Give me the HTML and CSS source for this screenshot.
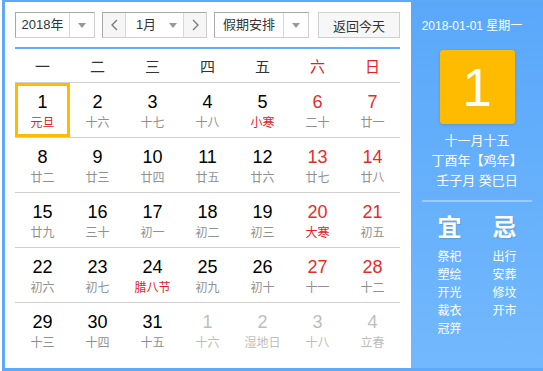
FILE: index.html
```html
<!DOCTYPE html>
<html lang="zh-CN">
<head>
    <meta charset="UTF-8">
    <title>万年历</title>
    <link rel="stylesheet" href="styles.css">
</head>
<body>

    <div class="calendar">

        <!-- Left part: selectors and month grid -->
        <div class="main">
            <div class="toolbar">
                <div class="select year-select">
                    <span class="select-text">2018年</span>
                    <span class="select-arrow"><i class="caret"></i></span>
                </div>
                <div class="select month-select">
                    <span class="nav-btn">
                        <svg width="7" height="12" viewBox="0 0 7 12"><polyline points="6,1 1,6 6,11" fill="none" stroke="#777" stroke-width="1.3"/></svg>
                    </span>
                    <span class="select-text month-text">1月</span>
                    <span class="month-caret"><i class="caret"></i></span>
                    <span class="nav-btn">
                        <svg width="7" height="12" viewBox="0 0 7 12"><polyline points="1,1 6,6 1,11" fill="none" stroke="#777" stroke-width="1.3"/></svg>
                    </span>
                </div>
                <div class="select holiday-select">
                    <span class="select-text">假期安排</span>
                    <span class="select-arrow"><i class="caret"></i></span>
                </div>
                <button class="today-btn">返回今天</button>
            </div>

            <div class="week-head">
                <span>一</span><span>二</span><span>三</span><span>四</span><span>五</span>
                <span class="red">六</span><span class="red">日</span>
            </div>

            <div class="week">
                <div class="day today"><b>1</b><em class="red">元旦</em></div>
                <div class="day"><b>2</b><em>十六</em></div>
                <div class="day"><b>3</b><em>十七</em></div>
                <div class="day"><b>4</b><em>十八</em></div>
                <div class="day"><b>5</b><em class="red">小寒</em></div>
                <div class="day weekend"><b>6</b><em>二十</em></div>
                <div class="day weekend"><b>7</b><em>廿一</em></div>
            </div>
            <div class="week">
                <div class="day"><b>8</b><em>廿二</em></div>
                <div class="day"><b>9</b><em>廿三</em></div>
                <div class="day"><b>10</b><em>廿四</em></div>
                <div class="day"><b>11</b><em>廿五</em></div>
                <div class="day"><b>12</b><em>廿六</em></div>
                <div class="day weekend"><b>13</b><em>廿七</em></div>
                <div class="day weekend"><b>14</b><em>廿八</em></div>
            </div>
            <div class="week">
                <div class="day"><b>15</b><em>廿九</em></div>
                <div class="day"><b>16</b><em>三十</em></div>
                <div class="day"><b>17</b><em>初一</em></div>
                <div class="day"><b>18</b><em>初二</em></div>
                <div class="day"><b>19</b><em>初三</em></div>
                <div class="day weekend"><b>20</b><em class="red">大寒</em></div>
                <div class="day weekend"><b>21</b><em>初五</em></div>
            </div>
            <div class="week">
                <div class="day"><b>22</b><em>初六</em></div>
                <div class="day"><b>23</b><em>初七</em></div>
                <div class="day"><b>24</b><em class="red">腊八节</em></div>
                <div class="day"><b>25</b><em>初九</em></div>
                <div class="day"><b>26</b><em>初十</em></div>
                <div class="day weekend"><b>27</b><em>十一</em></div>
                <div class="day weekend"><b>28</b><em>十二</em></div>
            </div>
            <div class="week last">
                <div class="day"><b>29</b><em>十三</em></div>
                <div class="day"><b>30</b><em>十四</em></div>
                <div class="day"><b>31</b><em>十五</em></div>
                <div class="day other"><b>1</b><em>十六</em></div>
                <div class="day other"><b>2</b><em>湿地日</em></div>
                <div class="day other"><b>3</b><em>十八</em></div>
                <div class="day other"><b>4</b><em>立春</em></div>
            </div>
        </div>

        <!-- Right part: selected day details -->
        <div class="side">
            <div class="side-date">2018-01-01 星期一</div>
            <div class="big-day">1</div>
            <div class="lunar">
                <p>十一月十五</p>
                <p>丁酉年【鸡年】</p>
                <p>壬子月 癸巳日</p>
            </div>
            <div class="side-line"></div>
            <div class="yiji">
                <div class="yiji-col">
                    <h3>宜</h3>
                    <p>祭祀</p><p>塑绘</p><p>开光</p><p>裁衣</p><p>冠笄</p>
                </div>
                <div class="yiji-col">
                    <h3>忌</h3>
                    <p>出行</p><p>安葬</p><p>修坟</p><p>开市</p>
                </div>
            </div>
        </div>

    </div>

</body>
</html>
```

FILE: styles.css
```css
/* Page */
body {
    margin: 0;
    font-family: "Liberation Sans", "Noto Sans CJK SC", sans-serif;
    color: #333;
}

/* Outer frame */
.calendar {
    display: flex;
    margin: -1px 0 0 2px;
    height: 366px;
    border: 3px solid #5eaaf9;
    border-right: none;
}

/* Left part */
.main {
    width: 406px;
    box-sizing: border-box;
    padding: 10px 11px 0 10px;
    background: #fff;
}

/* Top selectors */
.toolbar {
    display: flex;
    height: 26px;
    padding-bottom: 9px;
    border-bottom: 2px solid #63adf9;
    box-sizing: content-box;
}

.select {
    display: flex;
    box-sizing: border-box;
    height: 26px;
    border: 1px solid;
    border-color: #a8a8a8 #cfcfcf #cfcfcf #a8a8a8;
    background: #fff;
    font-size: 13px;
    line-height: 24px;
}

.select-text {
    flex: 1;
    text-align: center;
}

.select-arrow {
    width: 24px;
    border-left: 1px solid #d8d8d8;
    display: flex;
    align-items: center;
    justify-content: center;
}

.caret {
    width: 0;
    height: 0;
    border-left: 4px solid transparent;
    border-right: 4px solid transparent;
    border-top: 5px solid #999;
}

.year-select {
    width: 80px;
}

.month-select {
    width: 105px;
    margin-left: 7px;
}

.nav-btn {
    width: 22px;
    background: #f6f6f6;
    display: flex;
    align-items: center;
    justify-content: center;
}

.nav-btn:first-child {
    border-right: 1px solid #d8d8d8;
}

.nav-btn:last-child {
    border-left: 1px solid #d8d8d8;
}

.month-text {
    flex: none;
    width: 32px;
    padding-left: 4px;
}

.month-caret {
    flex: 1;
    display: flex;
    align-items: center;
    justify-content: center;
}

.holiday-select {
    width: 95px;
    margin-left: 7px;
}

.today-btn {
    width: 82px;
    height: 26px;
    margin-left: 9px;
    padding: 0;
    border: 1px solid #d0d0d0;
    background: #f7f7f7;
    font-family: inherit;
    font-size: 13px;
    color: #333;
}

/* Week header */
.week-head {
    display: grid;
    grid-template-columns: repeat(7, 55px);
    height: 34px;
    box-sizing: border-box;
    border-bottom: 1px solid #d0d0d0;
    font-size: 15px;
    line-height: 36px;
    text-align: center;
}

/* Day rows */
.week {
    display: grid;
    grid-template-columns: repeat(7, 55px);
    height: 55px;
    box-sizing: border-box;
    border-bottom: 1px solid #d0d0d0;
}

.week.last {
    border-bottom: none;
}

.day {
    display: flex;
    flex-direction: column;
    align-items: center;
    padding-top: 9px;
}

.day b {
    font-weight: normal;
    font-size: 18px;
    line-height: 20px;
    color: #000;
}

.day em {
    font-style: normal;
    font-size: 12px;
    line-height: 16px;
    margin-top: 3px;
    color: #909090;
}

.day.today {
    box-shadow: inset 0 0 0 3px #ffbb00;
}

.day.weekend b {
    color: #e52c2c;
}

.day.other b,
.day.other em {
    color: #bdbdbd;
}

.red,
.day em.red {
    color: #e02222;
}

/* Right part */
.side {
    width: 132px;
    padding-top: 14px;
    background: linear-gradient(#5aa8fa, #72b8fd);
    color: #fff;
    text-align: center;
}

.side-date {
    font-size: 12px;
    line-height: 20px;
    padding-right: 10px;
}

.big-day {
    width: 75px;
    height: 74px;
    margin: 14px auto 0;
    background: #ffbb00;
    border-radius: 3px;
    box-shadow: 0 1px 3px rgba(0, 0, 0, 0.15);
    font-size: 53px;
    line-height: 76px;
}

.lunar {
    margin-top: 7px;
    font-size: 13px;
    line-height: 20px;
}

.lunar p {
    margin: 0;
}

.side-line {
    height: 2px;
    margin: 9px 11px 0;
    background: rgba(255, 255, 255, 0.35);
}

.yiji {
    display: grid;
    grid-template-columns: 55px 55px;
    padding: 0 11px;
    margin-top: 11px;
}

.yiji h3 {
    margin: 0 0 5px;
    font-size: 24px;
    line-height: 30px;
    font-weight: bold;
    text-shadow: 1px 1px 1px rgba(0, 0, 0, 0.12);
}

.yiji p {
    margin: 0;
    font-size: 12px;
    line-height: 18px;
}
```
